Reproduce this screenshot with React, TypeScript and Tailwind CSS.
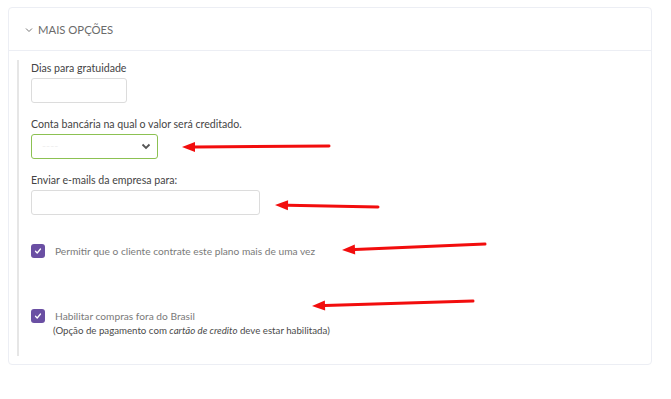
import React from "react";

const font = { fontFamily: "Lato, 'Open Sans', sans-serif" };

function Arrow({ x1, y1, x2, y2 }: { x1: number; y1: number; x2: number; y2: number }) {
  // tail at (x1,y1), tip at (x2,y2)
  const ang = Math.atan2(y2 - y1, x2 - x1);
  const len = 13;
  const w = 5;
  const bx = x2 - len * Math.cos(ang);
  const by = y2 - len * Math.sin(ang);
  const px = -Math.sin(ang) * w;
  const py = Math.cos(ang) * w;
  return (
    <g>
      <line x1={x1} y1={y1} x2={bx} y2={by} stroke="#f20d0d" strokeWidth={3} strokeLinecap="round" />
      <polygon points={`${x2},${y2} ${bx + px},${by + py} ${bx - px},${by - py}`} fill="#f20d0d" />
    </g>
  );
}

function Check() {
  return (
    <span className="flex h-[14px] w-[14px] shrink-0 items-center justify-center rounded-[3px] bg-[#6a4fa3]">
      <svg width="8" height="8" viewBox="0 0 8 8">
        <path d="M1.5 4.3 L3.2 6 L6.5 2" fill="none" stroke="#fff" strokeWidth={1.3} strokeLinecap="round" strokeLinejoin="round" />
      </svg>
    </span>
  );
}

export default function App() {
  return (
    <div className="relative h-[399px] w-[671px] bg-white pl-[8px] pt-[7px]" style={font}>
      <div className="w-[644px] rounded-[4px] border border-[#eceef4] bg-white">
        <div className="flex h-[43px] items-center border-b border-[#eceef4] pl-[16px] pt-[2px]">
          <svg width="8" height="6" viewBox="0 0 8 6" className="mr-[5px]">
            <path d="M1 1.5 L4 4.5 L7 1.5" fill="none" stroke="#777" strokeWidth={1} />
          </svg>
          <span className="text-[11.3px] uppercase text-[#6b6b6b]">Mais opções</span>
        </div>
        <div className="pl-[8px] pt-[9px] pb-[8px]">
          <div className="border-l-2 border-[#e6e6e6] pl-[12px] pt-[1px] pb-[19px]">
            <label className="block text-[10.6px] leading-[14px] text-[#444]">Dias para gratuidade</label>
            <input className="mt-[3px] block h-[25px] w-[96px] rounded-[3px] border border-[#dcdcdc] outline-none" />

            <label className="mt-[14px] block text-[10.6px] leading-[14px] text-[#444]">
              Conta bancária na qual o valor será creditado.
            </label>
            <div className="mt-[3px] flex h-[25px] w-[127px] items-center justify-between rounded-[3px] border border-[#8cc152] pl-[10px] pr-[6px]">
              <span className="text-[11px] text-[#f0f0f0]">----</span>
              <svg width="10" height="7" viewBox="0 0 10 7">
                <path d="M1.5 1.5 L5 5 L8.5 1.5" fill="none" stroke="#555" strokeWidth={1.8} />
              </svg>
            </div>

            <label className="mt-[14px] block text-[10.6px] leading-[14px] text-[#444]">
              Enviar e-mails da empresa para:
            </label>
            <input className="mt-[3px] block h-[25px] w-[229px] rounded-[3px] border border-[#dcdcdc] outline-none" />

            <div className="mt-[29px] flex h-[14px] items-center">
              <Check />
              <span className="ml-[10px] text-[10.2px] leading-[14px] text-[#7a7a7a]">Permitir que o cliente contrate este plano mais de uma vez</span>
            </div>

            <div className="mt-[51px] flex h-[14px] items-center">
              <Check />
              <span className="ml-[10px] text-[10.2px] leading-[14px] text-[#7a7a7a]">Habilitar compras fora do Brasil</span>
            </div>
            <div className="ml-[22px] mt-[0px] text-[9.7px] leading-[14px] text-[#4a4a4a]">
              (Opção de pagamento com <em>cartão de credito</em> deve estar habilitada)
            </div>
          </div>
        </div>
      </div>

      <svg className="pointer-events-none absolute left-0 top-0" width="671" height="399" viewBox="0 0 671 399">
        <Arrow x1={329} y1={146} x2={182} y2={147} />
        <Arrow x1={378} y1={207} x2={275} y2={205} />
        <Arrow x1={485} y1={244} x2={342} y2={250} />
        <Arrow x1={473} y1={301} x2={312} y2={306} />
      </svg>
    </div>
  );
}
